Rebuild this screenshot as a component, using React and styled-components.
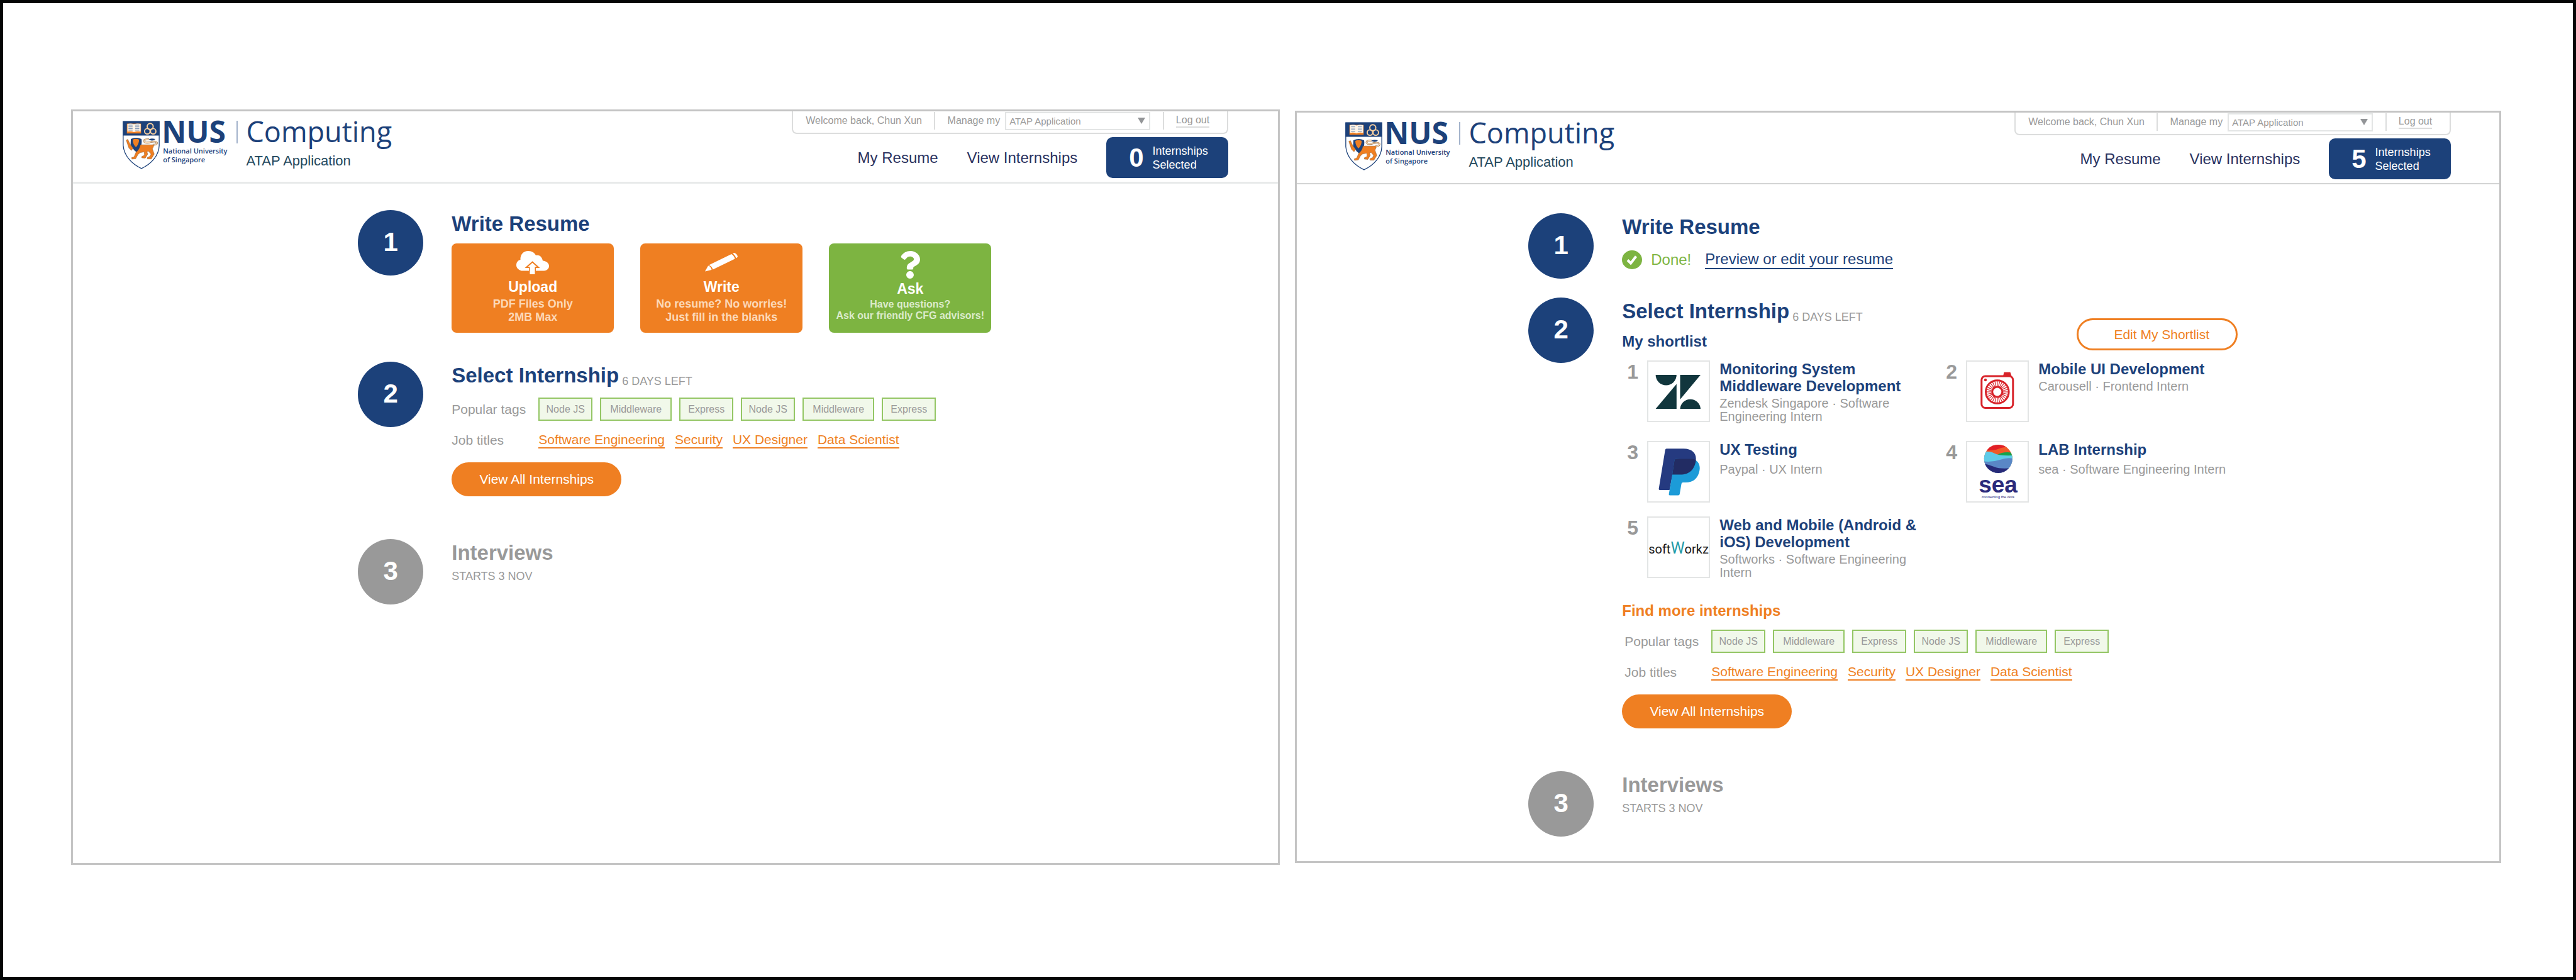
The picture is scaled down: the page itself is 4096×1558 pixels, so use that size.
import React from "react";
import styled, { createGlobalStyle } from "styled-components";
import { FaQuestion } from "react-icons/fa";

const navy = "#1c417a";
const orange = "#ef7f22";
const green = "#7db441";
const grey = "#999999";
const sans = `"Liberation Sans", Arial, sans-serif`;
const humanist = `"Open Sans", "Noto Sans", sans-serif`;

const GlobalStyle = createGlobalStyle`
  * { box-sizing: border-box; }
  body { margin: 0; background: #fff; font-family: ${sans}; color: ${grey}; }
  h1, h2, h3, p, ul, ol { margin: 0; padding: 0; font-weight: inherit; }
  ul, ol { list-style: none; }
  button, select { font-family: inherit; margin: 0; }
  a { color: inherit; text-decoration: none; }
`;

const Board = styled.main`
  display: grid;
  grid-template-columns: 1923fr 1918fr;
  gap: 24px;
  min-height: 100vh;
  padding: 169px 114px 178px 108px;
  border: 5px solid #040606;
`;

const Screen = styled.section`
  border: 3px solid #c4c4c4;
  margin: ${(p) => (p.$inset ? "2px 0 3px" : "0")};
`;

/* Header */

const Header = styled.header`
  border-bottom: ${(p) => (p.$thin ? "2px solid #d3d4d4" : "3px solid #e8eaea")};
`;

const HeaderInner = styled.div`
  display: flex;
  justify-content: space-between;
  height: 112px;
  max-width: 1758px;
  margin: 0 auto;
`;

const Brand = styled.a`
  display: flex;
  align-items: flex-start;
  color: ${navy};
`;

const Crest = styled.svg`
  width: 59px;
  height: 77px;
  margin: 15px 3px 0 0;
`;

const BrandColumn = styled.span`
  display: flex;
  flex-direction: column;
  padding-top: 8px;
`;

const University = styled.strong`
  font: 700 48px/48px ${humanist};
`;

const UniversityName = styled.span`
  padding-left: 2px;
  font: 600 11px/14px ${humanist};
`;

const BrandRule = styled.span`
  width: 2px;
  height: 36px;
  margin: 15px 14px 0;
  background: #a3b3cb;
`;

const School = styled.span`
  font: 400 45px/48px ${humanist};
`;

const Product = styled.span`
  margin-top: 11px;
  font-size: 22px;
  line-height: 24px;
  color: #24495e;
`;

const HeaderSide = styled.div`
  display: flex;
  flex-direction: column;
  align-items: flex-end;
  gap: 5px;
`;

const AccountBar = styled.div`
  display: flex;
  align-items: center;
  justify-content: space-between;
  width: 694px;
  height: 36px;
  padding: 0 28px 4px 20px;
  border: 2px solid #dcdddd;
  border-top: 0;
  border-radius: 0 0 8px 8px;
  font-size: 16px;
  line-height: 20px;
`;

const BarRule = styled.span`
  width: 2px;
  height: 28px;
  background: #dcdddd;
`;

const Manage = styled.div`
  display: flex;
  align-items: center;
  gap: 8px;
`;

const SelectWrap = styled.div`
  display: grid;
  align-items: center;
  > * { grid-area: 1 / 1; }
`;

const Select = styled.select`
  appearance: none;
  width: 231px;
  height: 29px;
  padding: 0 28px 0 5px;
  border: 2px solid #e3e5e5;
  border-radius: 0;
  background: #fff;
  color: ${grey};
  font-size: 15px;
`;

const Arrow = styled.svg`
  justify-self: end;
  width: 12px;
  height: 10px;
  margin-right: 8px;
  pointer-events: none;
`;

const LogOut = styled.a`
  border-bottom: 2px solid #dcdddd;
`;

const Nav = styled.nav`
  display: flex;
  align-items: center;
  gap: 46px;
  font-size: 24px;
  line-height: 28px;
  color: #2a3260;
`;

const Selected = styled.button`
  display: flex;
  align-items: center;
  gap: 14px;
  width: 194px;
  height: 65px;
  padding: 0 0 0 36px;
  border: 0;
  border-radius: 10px;
  background: ${navy};
  color: #fff;
  text-align: left;
`;

const Count = styled.strong`
  font-size: 42px;
  line-height: 48px;
`;

const CountLabel = styled.span`
  font-size: 18px;
  line-height: 22px;
`;

/* Steps */

const Steps = styled.ol`
  max-width: ${(p) => (p.$wide ? 1176 : 1010)}px;
  margin: 0 auto;
  padding-top: ${(p) => (p.$wide ? 46 : 42)}px;
`;

const StepRow = styled.li`
  display: flex;
  align-items: flex-start;
  gap: 45px;
  margin-bottom: ${(p) => p.$after}px;
`;

const Bullet = styled.span`
  flex: none;
  width: 104px;
  height: 104px;
  border-radius: 50%;
  background: ${(p) => (p.$muted ? grey : navy)};
  color: #fff;
  font-size: 42px;
  font-weight: 700;
  line-height: 102px;
  text-align: center;
`;

const StepBody = styled.div`
  flex: 1;
  padding-top: 3px;
`;

const TitleRow = styled.div`
  display: flex;
  align-items: flex-end;
  gap: 5px;
`;

const StepTitle = styled.h2`
  color: ${(p) => (p.$muted ? grey : navy)};
  font-size: 33px;
  font-weight: 700;
  line-height: 38px;
`;

const Note = styled.p`
  font-size: 18px;
  line-height: 20px;
  margin-top: ${(p) => (p.$below ? 8 : 0)}px;
`;

const Cards = styled.div`
  display: flex;
  gap: 42px;
  margin-top: 12px;
`;

const Card = styled.button`
  display: flex;
  flex-direction: column;
  align-items: center;
  width: 258px;
  height: 142px;
  padding: 10px 0 0;
  border: 0;
  border-radius: 8px;
  background: ${(p) => (p.$tone === "green" ? green : orange)};
  color: #fff;
  font-weight: 700;
  white-space: nowrap;
`;

const CardIcon = styled.span`
  display: grid;
  place-items: center;
  height: ${(p) => (p.$tall ? 48 : 40)}px;
`;

const CardTitle = styled.span`
  margin-top: ${(p) => (p.$tall ? 1 : 6)}px;
  font-size: 23px;
  line-height: 27px;
`;

const CardText = styled.span`
  margin-top: ${(p) => (p.$small ? 2 : 3)}px;
  font-size: ${(p) => (p.$small ? 16 : 18)}px;
  line-height: ${(p) => (p.$small ? 18 : 21)}px;
  color: ${(p) => (p.$small ? "#dcebcb" : "#fcd9b9")};
`;

const DoneRow = styled.div`
  display: flex;
  align-items: center;
  gap: 14px;
  margin-top: 18px;
  font-size: 24px;
  line-height: 28px;
  color: ${green};
`;

const ResumeLink = styled.a`
  margin-left: 8px;
  border-bottom: 2px solid ${navy};
  color: ${navy};
`;

const ListHead = styled.div`
  display: flex;
  align-items: flex-end;
  justify-content: space-between;
  max-width: 979px;
`;

const SubTitle = styled.h3`
  margin-top: ${(p) => p.$before}px;
  color: ${(p) => (p.$accent ? orange : navy)};
  font-size: 24px;
  font-weight: 700;
  line-height: 28px;
`;

const Pill = styled.button`
  border-radius: 27px;
  font-size: 21px;
  line-height: 24px;
`;

const ViewAll = styled(Pill)`
  display: block;
  width: 270px;
  height: 54px;
  margin-top: 22px;
  border: 0;
  background: ${orange};
  color: #fff;
`;

const EditList = styled(Pill)`
  width: 256px;
  height: 51px;
  padding: 0 0 0 14px;
  border: 3px solid ${orange};
  background: #fff;
  color: ${orange};
`;

const Shortlist = styled.ol`
  display: grid;
  grid-template-columns: 507px 507px;
  grid-template-rows: 128px 120px auto;
  margin: 16px 0 0 8px;
`;

const Entry = styled.li`
  display: flex;
  align-items: flex-start;
`;

const Rank = styled.span`
  width: 32px;
  font-size: 32px;
  font-weight: 700;
  line-height: 36px;
`;

const Logo = styled.svg`
  flex: none;
  width: 100px;
  height: 98px;
  border: 2px solid #e3e5e5;
`;

const EntryText = styled.div`
  width: 326px;
  margin-left: 15px;
`;

const EntryTitle = styled.a`
  display: block;
  color: ${navy};
  font-size: 24px;
  font-weight: 700;
  line-height: 27px;
`;

const EntryMeta = styled.p`
  margin-top: ${(p) => (p.$roomy ? 8 : 4)}px;
  font-size: 20px;
  line-height: 21px;
`;

const Finder = styled.div`
  display: grid;
  grid-template-columns: 138px 1fr;
  row-gap: 18px;
  align-items: center;
  margin-top: 16px;
  padding-left: ${(p) => (p.$indent ? 4 : 0)}px;
  font-size: 21px;
  line-height: 24px;
`;

const Tags = styled.ul`
  display: flex;
  gap: 12px;
`;

const Tag = styled.li`
  width: ${(p) => (p.$wide ? 114 : 86)}px;
  height: 37px;
  border: 2px solid #94c665;
  background: #f1f8ea;
  font-size: 16px;
  line-height: 33px;
  text-align: center;
`;

const Jobs = styled.ul`
  display: flex;
  gap: 16px;
  color: ${orange};
`;

const JobLink = styled.a`
  display: block;
  border-bottom: 2px solid ${orange};
`;

/* Drawings */

function CrestArt() {
  return (
    <Crest viewBox="52 75 272 353" aria-hidden="true">
      <path d="M56 79H320V255C318 330 262 390 190 424C118 390 62 330 56 255Z" fill="#fff" stroke={navy} strokeWidth="6" />
      <path d="M54 78H322V182H54Z" fill={navy} />
      <path d="M83 95H187V167H83Z" fill={orange} />
      <path d="M87 97Q112 91 135 99Q160 91 184 97V154Q160 148 135 157Q112 148 87 154Z" fill="#fff5e8" />
      <path d="M95 106h30M95 118h30M95 131h30M95 143h30M144 106h30M144 118h30M144 131h30M144 143h30" stroke="#7f97b8" strokeWidth="6" />
      <g fill="none" stroke="#f7cf9f" strokeWidth="9">
        <circle cx="254" cy="116" r="22" />
        <circle cx="233" cy="151" r="20" />
        <circle cx="276" cy="151" r="20" />
      </g>
      <path d="M112 208Q150 188 190 208Q196 235 184 268L156 306L136 290L110 250Z" fill={navy} />
      <path d="M126 212Q150 200 172 212Q174 240 150 268Q126 246 126 212Z" fill={orange} />
      <path d="M78 216L90 210L108 248L128 276L116 292L98 274Z" fill={orange} stroke="#76512f" strokeWidth="2" />
      <path d="M182 250H250Q272 252 282 246Q280 266 270 280L284 318L262 354L234 354L232 344L252 334L260 318L242 298L230 300L236 318L218 348L192 346L192 336L212 326L210 302L180 308L164 322L148 352L120 355L118 344L136 338L150 304Q176 286 182 250Z" fill={orange} stroke="#76512f" strokeWidth="2" />
      <path d="M276 250Q306 250 303 234Q298 222 262 228Q212 244 208 222Q208 208 246 210" fill="none" stroke="#8c6238" strokeWidth="12" />
      <path d="M276 250Q306 250 303 234Q298 222 262 228Q212 244 208 222Q208 208 246 210" fill="none" stroke="#f8d9b5" strokeWidth="7" />
      <path d="M242 212Q256 200 292 208Q282 222 260 218Z" fill={navy} />
    </Crest>
  );
}

const CloudUpload = () => (
  <svg width="52" height="37" viewBox="0 0 52 37" aria-hidden="true">
    <path d="M8 31.500C3 30 0 26.500 0 22.500C0 18 2.500 15 6.500 14C6 6 11 0 19 0C25 0 29 3 31 7C36 5.500 41 9 42 15.500C48 16 52 19.500 52 24C52 28 49 31 44 31.500Z" fill="#fff" />
    <path d="M25.500 17.500L35 26H30V32H21V26H16Z" fill="#fff" stroke={orange} strokeWidth="2" />
    <path d="M21.500 25H29.500V37H21.500Z" fill="#fff" />
  </svg>
);

const Pencil = () => (
  <svg width="52" height="30" viewBox="0 0 52 30" aria-hidden="true">
    <path d="M0 29.500L5 20.500Q9 21 10.500 27Z" fill="#fff" />
    <path d="M6 19.500L42 2Q46 4 47.500 9.500L12.500 26.500Q11 21 6 19.500Z" fill="#fff" />
    <path d="M44 1L46.500 0Q51.500 1.500 52 6.500L49.500 8.500Q48 3.500 44 1Z" fill="#fff" />
  </svg>
);

const DoneMark = () => (
  <svg width="32" height="30" viewBox="0 0 32 30" aria-hidden="true">
    <ellipse cx="16" cy="15" rx="16" ry="15" fill={green} />
    <path d="M9 15.500L14 20.500L22.500 9.500" fill="none" stroke="#fff" strokeWidth="4" />
  </svg>
);

const ZendeskArt = () => (
  <g fill="#11363d">
    <path d="M13.600 23H46.800A16.600 16.600 0 0 1 13.600 23Z" />
    <path d="M46.800 37.500V77H13.600Z" />
    <path d="M52.500 23H85L52.500 62Z" />
    <path d="M52.500 77A16.300 16.600 0 0 1 85 77Z" />
  </g>
);

const spokes = Array.from({ length: 28 }, (_, i) => (i * Math.PI * 2) / 28);

const CarousellArt = () => (
  <g fill="none" stroke="#d8232a">
    <rect x="24.800" y="25" width="50" height="50.500" rx="6" strokeWidth="3" />
    <path d="M60.500 18.700H70.500L72.500 25H59Z" fill="#d8232a" stroke="none" />
    <circle cx="31" cy="31" r="2.200" fill="#d8232a" stroke="none" />
    <circle cx="49.800" cy="50" r="18.300" strokeWidth="3" />
    <circle cx="49.800" cy="50" r="8" strokeWidth="3" />
    {spokes.map((a) => (
      <path
        key={a}
        strokeWidth="1.200"
        d={`M${49.8 + 9 * Math.cos(a)} ${50 + 9 * Math.sin(a)}L${49.8 + 17 * Math.cos(a)} ${50 + 17 * Math.sin(a)}`}
      />
    ))}
  </g>
);

const PaypalArt = () => (
  <g>
    <path d="M31 12.200H58C72 12.200 79 20 77.500 31C75 47 66 53.500 53 53.500H40.500L35.700 78H20Q18.300 78 18.600 76L28.800 14Q29.200 12.200 31 12.200Z" fill="#253a80" />
    <path d="M77.700 31C82 34 84.500 39 83.500 46C81.500 59 74 66 61 66H57Q55 66 54.600 68L51.800 84.500Q51.400 86.500 49.500 86.500H36Q34.300 86.500 34.600 84.500L40 53.500L43.500 30.500Q44 28.600 46 28.600Z" fill="#1c9bd8" />
    <path d="M46 28.600H72Q76 29 77.700 31C75 47 66 53.500 53 53.500H40L43.500 30.500Q44 28.600 46 28.600Z" fill="#222c63" />
  </g>
);

const SeaArt = () => (
  <g>
    <clipPath id="globe">
      <circle cx="51.300" cy="28.400" r="22.500" />
    </clipPath>
    <g clipPath="url(#globe)">
      <path d="M28 5H75V52H28Z" fill="#f15a29" />
      <path d="M28 5H75V9Q60 9 52 12.500T28 15Z" fill="#e11f26" />
      <path d="M50 22Q60 16 75 19V27H50Z" fill="#17a24a" />
      <path d="M28 17Q38 16 46 20T75 23V52H28Z" fill="#5fcbe8" />
      <path d="M28 32.500Q42 34 54 30T75 28V52H28Z" fill="#5a87c6" />
      <path d="M28 36Q38 38 46 41.500T75 43V52H28Z" fill="#272a78" />
    </g>
    <text x="51" y="82" textAnchor="middle" fontFamily={sans} fontWeight="700" fontSize="37" fill="#2b2a7b">sea</text>
    <text x="51" y="91" textAnchor="middle" fontFamily={sans} fontSize="6" fill="#2b2a7b">connecting the dots</text>
  </g>
);

const SoftworkzArt = () => (
  <text x="50" y="59" textAnchor="middle" fontFamily="Roboto, sans-serif" fontSize="20" fill="#1a1a1a">
    soft<tspan fill="#1f9aa8" fontSize="25">W</tspan>orkz
  </text>
);

/* Content */

const tags = ["Node JS", "Middleware", "Express", "Node JS", "Middleware", "Express"];
const jobs = ["Software Engineering", "Security", "UX Designer", "Data Scientist"];

const shortlist = [
  { title: "Monitoring System Middleware Development", meta: "Zendesk Singapore · Software Engineering Intern", art: <ZendeskArt /> },
  { title: "Mobile UI Development", meta: "Carousell · Frontend Intern", art: <CarousellArt /> },
  { title: "UX Testing", meta: "Paypal · UX Intern", art: <PaypalArt />, roomy: true },
  { title: "LAB Internship", meta: "sea · Software Engineering Intern", art: <SeaArt />, roomy: true },
  { title: "Web and Mobile (Android & iOS) Development", meta: "Softworks · Software Engineering Intern", art: <SoftworkzArt /> },
];

function SiteHeader({ id, count, thin }) {
  return (
    <Header $thin={thin}>
      <HeaderInner>
        <Brand href="#home">
          <CrestArt />
          <BrandColumn>
            <University>NUS</University>
            <UniversityName>National University</UniversityName>
            <UniversityName>of Singapore</UniversityName>
          </BrandColumn>
          <BrandRule />
          <BrandColumn>
            <School>Computing</School>
            <Product>ATAP Application</Product>
          </BrandColumn>
        </Brand>
        <HeaderSide>
          <AccountBar>
            <span>Welcome back, Chun Xun</span>
            <BarRule />
            <Manage>
              <label htmlFor={id}>Manage my</label>
              <SelectWrap>
                <Select id={id} defaultValue="atap">
                  <option value="atap">ATAP Application</option>
                </Select>
                <Arrow viewBox="0 0 12 10" aria-hidden="true">
                  <path d="M0 0H12L6 10Z" fill="#939598" />
                </Arrow>
              </SelectWrap>
            </Manage>
            <BarRule />
            <LogOut href="#logout">Log out</LogOut>
          </AccountBar>
          <Nav>
            <a href="#resume">My Resume</a>
            <a href="#internships">View Internships</a>
            <Selected type="button">
              <Count>{count}</Count>
              <CountLabel>
                Internships
                <br />
                Selected
              </CountLabel>
            </Selected>
          </Nav>
        </HeaderSide>
      </HeaderInner>
    </Header>
  );
}

function Step({ number, muted, after = 0, children }) {
  return (
    <StepRow $after={after}>
      <Bullet $muted={muted}>{number}</Bullet>
      <StepBody>{children}</StepBody>
    </StepRow>
  );
}

function InternshipFinder({ indent }) {
  return (
    <>
      <Finder $indent={indent}>
        <span>Popular tags</span>
        <Tags>
          {tags.map((t, i) => (
            <Tag key={i} $wide={t === "Middleware"}>{t}</Tag>
          ))}
        </Tags>
        <span>Job titles</span>
        <Jobs>
          {jobs.map((j) => (
            <li key={j}>
              <JobLink href="#job">{j}</JobLink>
            </li>
          ))}
        </Jobs>
      </Finder>
      <ViewAll type="button">View All Internships</ViewAll>
    </>
  );
}

function SelectTitle() {
  return (
    <TitleRow>
      <StepTitle>Select Internship</StepTitle>
      <Note>6 DAYS LEFT</Note>
    </TitleRow>
  );
}

function InterviewStep() {
  return (
    <Step number={3} muted>
      <StepTitle $muted>Interviews</StepTitle>
      <Note $below>STARTS 3 NOV</Note>
    </Step>
  );
}

export default function App() {
  return (
    <>
      <GlobalStyle />
      <Board>
        <Screen>
          <SiteHeader id="manage-start" count={0} />
          <Steps>
            <Step number={1} after={46}>
              <StepTitle>Write Resume</StepTitle>
              <Cards>
                <Card type="button">
                  <CardIcon><CloudUpload /></CardIcon>
                  <CardTitle>Upload</CardTitle>
                  <CardText>PDF Files Only<br />2MB Max</CardText>
                </Card>
                <Card type="button">
                  <CardIcon><Pencil /></CardIcon>
                  <CardTitle>Write</CardTitle>
                  <CardText>No resume? No worries!<br />Just fill in the blanks</CardText>
                </Card>
                <Card type="button" $tone="green">
                  <CardIcon $tall><FaQuestion size={44} /></CardIcon>
                  <CardTitle $tall>Ask</CardTitle>
                  <CardText $small>Have questions?<br />Ask our friendly CFG advisors!</CardText>
                </Card>
              </Cards>
            </Step>
            <Step number={2} after={68}>
              <SelectTitle />
              <InternshipFinder />
            </Step>
            <InterviewStep />
          </Steps>
        </Screen>

        <Screen $inset>
          <SiteHeader id="manage-shortlist" count={5} thin />
          <Steps $wide>
            <Step number={1} after={30}>
              <StepTitle>Write Resume</StepTitle>
              <DoneRow>
                <DoneMark />
                <span>Done!</span>
                <ResumeLink href="#resume">Preview or edit your resume</ResumeLink>
              </DoneRow>
            </Step>
            <Step number={2} after={68}>
              <ListHead>
                <div>
                  <SelectTitle />
                  <SubTitle $before={15}>My shortlist</SubTitle>
                </div>
                <EditList type="button">Edit My Shortlist</EditList>
              </ListHead>
              <Shortlist>
                {shortlist.map((s, i) => (
                  <Entry key={s.title}>
                    <Rank>{i + 1}</Rank>
                    <Logo viewBox="2 2 96 94">{s.art}</Logo>
                    <EntryText>
                      <EntryTitle href="#internship">{s.title}</EntryTitle>
                      <EntryMeta $roomy={s.roomy}>{s.meta}</EntryMeta>
                    </EntryText>
                  </Entry>
                ))}
              </Shortlist>
              <SubTitle $before={36} $accent>Find more internships</SubTitle>
              <InternshipFinder indent />
            </Step>
            <InterviewStep />
          </Steps>
        </Screen>
      </Board>
    </>
  );
}
